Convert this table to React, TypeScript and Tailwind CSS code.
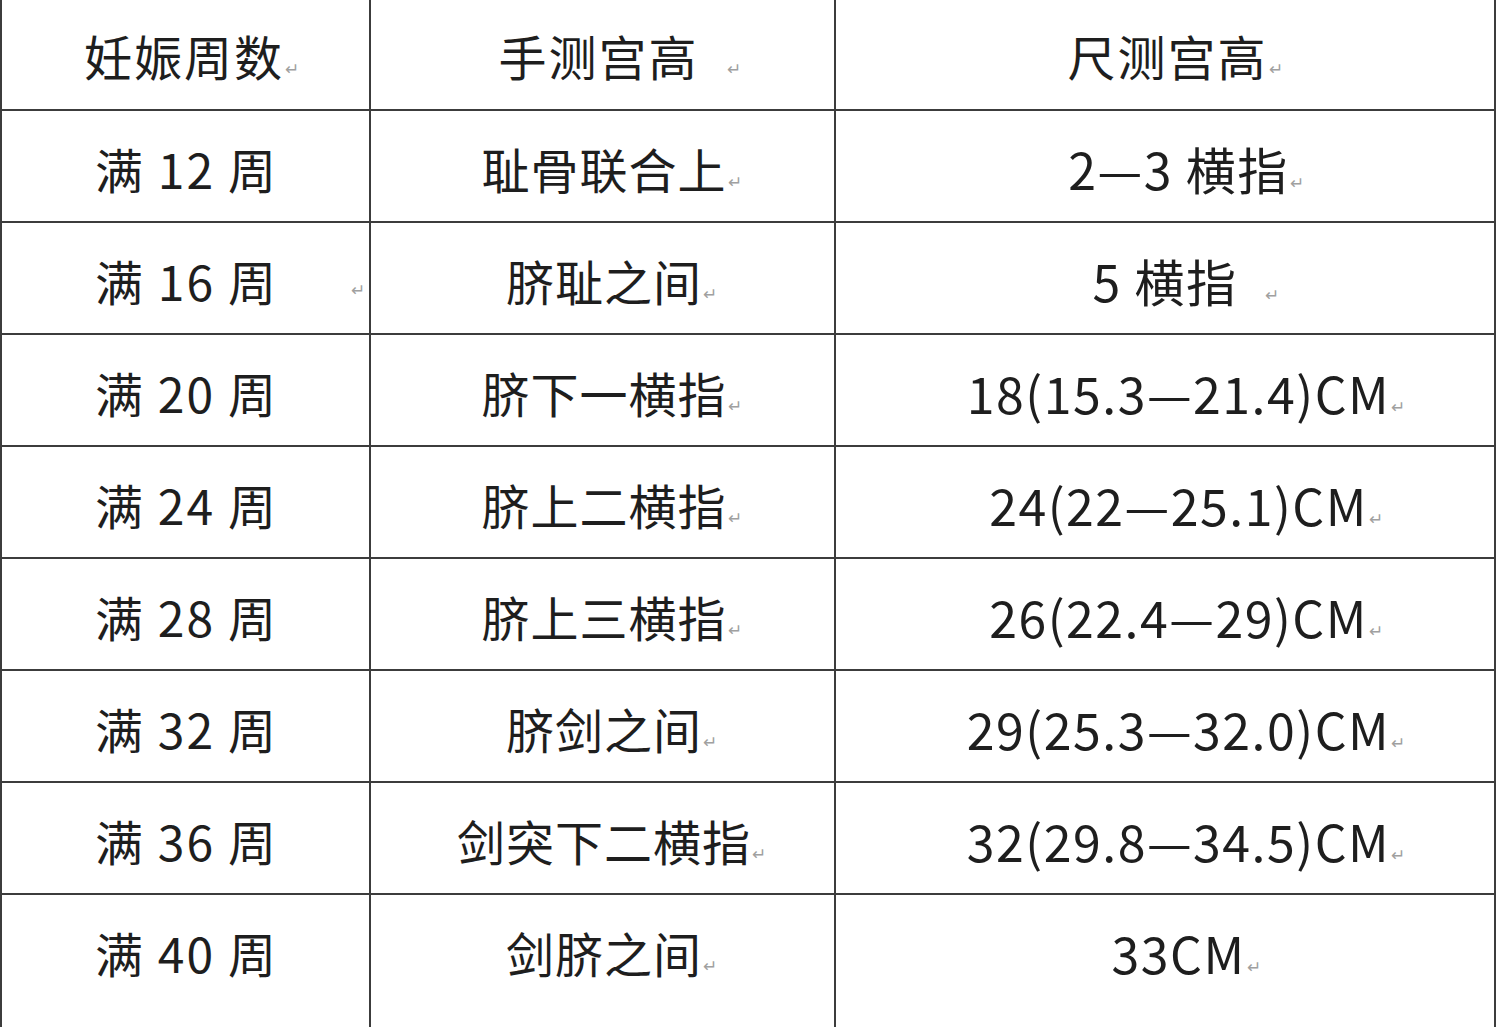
import React from "react";

type Row = { c1: string; c2: string; c3: string; c1Mark?: boolean; c3Gap?: boolean };

const rows: Row[] = [
  { c1: "满 12 周", c2: "耻骨联合上", c3: "2—3 横指" },
  { c1: "满 16 周", c2: "脐耻之间", c3: "5 横指", c1Mark: true, c3Gap: true },
  { c1: "满 20 周", c2: "脐下一横指", c3: "18(15.3—21.4)CM" },
  { c1: "满 24 周", c2: "脐上二横指", c3: "24(22—25.1)CM" },
  { c1: "满 28 周", c2: "脐上三横指", c3: "26(22.4—29)CM" },
  { c1: "满 32 周", c2: "脐剑之间", c3: "29(25.3—32.0)CM" },
  { c1: "满 36 周", c2: "剑突下二横指", c3: "32(29.8—34.5)CM" },
  { c1: "满 40 周", c2: "剑脐之间", c3: "33CM" },
];

function Mark({ gap }: { gap?: boolean }) {
  return (
    <span
      className={`text-[17px] tracking-normal leading-none text-[#a0a0a0] self-end mb-[3px] ${gap ? "ml-[28px]" : "ml-[1px]"}`}
    >
      ↵
    </span>
  );
}

export default function App() {
  const font = { fontFamily: '"Noto Sans CJK SC", "Noto Sans", sans-serif' };
  return (
    <div className="w-[1500px] h-[1027px] bg-white overflow-hidden" style={font}>
      <div className="w-[1496px] border-l-2 border-r-2 border-[#3c3c3c] text-[48px] leading-none text-[#1e1e1e]">
        {/* header */}
        <div className="grid grid-cols-[369px_465px_660px] h-[111px] border-b-2 border-[#3c3c3c]">
          <div className="border-r-2 border-[#3c3c3c] flex items-center justify-center pl-[12px] pt-[1px]">
            <span className="flex items-center tracking-[2px]">妊娠周数<Mark /></span>
          </div>
          <div className="border-r-2 border-[#3c3c3c] flex items-center justify-center pl-[34px] pt-[1px]">
            <span className="flex items-center tracking-[2px]">手测宫高<Mark gap /></span>
          </div>
          <div className="flex items-center justify-center pl-[18px] pt-[1px]">
            <span className="flex items-center tracking-[2px]">尺测宫高<Mark /></span>
          </div>
        </div>
        {rows.map((r, i) => {
          const last = i === rows.length - 1;
          return (
            <div
              key={i}
              className={`grid grid-cols-[369px_465px_660px] ${last ? "h-[132px]" : "h-[112px] border-b-2 border-[#3c3c3c]"}`}
            >
              <div className="relative border-r-2 border-[#3c3c3c]">
                <div className="h-[110px] flex items-center justify-center pt-[4px] pl-[2px]">
                  <span className="tracking-[2px]">{r.c1}</span>
                </div>
                {r.c1Mark && (
                  <span className="absolute right-[4px] top-[57px] text-[17px] leading-none text-[#a0a0a0]">↵</span>
                )}
              </div>
              <div className="border-r-2 border-[#3c3c3c]">
                <div className="h-[110px] flex items-center justify-center pl-[18px] pt-[4px]">
                  <span className="flex items-center tracking-[1px]">{r.c2}<Mark /></span>
                </div>
              </div>
              <div>
                <div className="h-[110px] flex items-center justify-center pl-[40px] pt-[4px]">
                  <span className="flex items-center whitespace-pre text-[50px] tracking-[1.5px]">
                    {r.c3}
                    <Mark gap={r.c3Gap} />
                  </span>
                </div>
              </div>
            </div>
          );
        })}
      </div>
    </div>
  );
}
